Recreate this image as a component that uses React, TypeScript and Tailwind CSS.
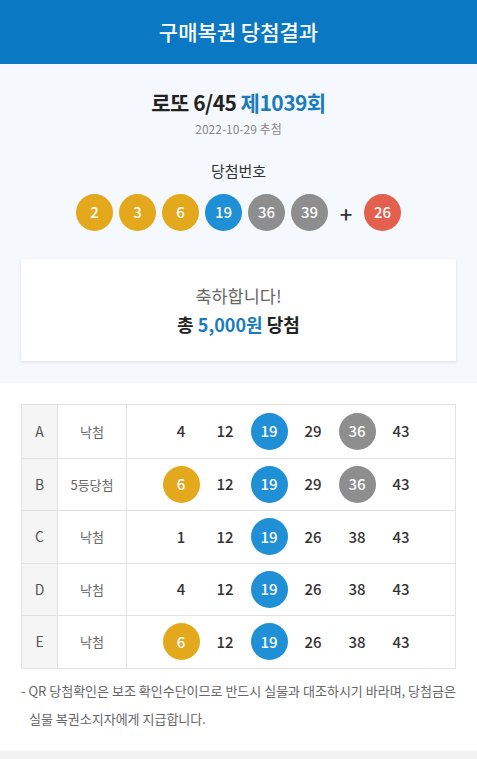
const FONT = "font-['Noto_Sans_CJK_KR','Noto_Sans',sans-serif]";

const WIN = [2, 3, 6, 19, 36, 39];
const BONUS = 26;

const ROWS = [
  { label: "A", result: "낙첨", nums: [4, 12, 19, 29, 36, 43] },
  { label: "B", result: "5등당첨", nums: [6, 12, 19, 29, 36, 43] },
  { label: "C", result: "낙첨", nums: [1, 12, 19, 26, 38, 43] },
  { label: "D", result: "낙첨", nums: [4, 12, 19, 26, 38, 43] },
  { label: "E", result: "낙첨", nums: [6, 12, 19, 26, 38, 43] },
];

function ballColor(n: number) {
  if (n <= 10) return "bg-[#e4a81d]";
  if (n <= 20) return "bg-[#1f8fd6]";
  if (n <= 30) return "bg-[#e3604f]";
  if (n <= 40) return "bg-[#8e8e8e]";
  return "bg-[#a9c94a]";
}

function Ball({ n }: { n: number }) {
  return (
    <div
      className={`w-[37px] h-[37px] rounded-full flex items-center justify-center text-white text-[15px] font-medium ${ballColor(n)}`}
    >
      {n}
    </div>
  );
}

export default function App() {
  return (
    <main className={`w-[477px] min-h-[759px] bg-white ${FONT}`}>
      <header className="h-[64px] bg-[#0a78c2] flex items-center justify-center">
        <h1 className="text-white text-[21px] font-medium">구매복권 당첨결과</h1>
      </header>

      <section className="bg-[#f5f9fd] pt-[23px] pb-[22px] px-[21px]">
        <div className="flex flex-col items-center">
          <h2 className="text-[21px] font-bold text-[#222] leading-[30px] tracking-tight">
            로또 6/45 <span className="text-[#1a7cbf]">제1039회</span>
          </h2>
          <p className="text-[12px] text-[#888] leading-[18px] mt-[3px]">2022-10-29 추첨</p>
          <p className="text-[15px] text-[#333] leading-[22px] mt-[22px]">당첨번호</p>
          <div className="flex items-center gap-[6px] mt-[12px]">
            {WIN.map((n) => (
              <Ball key={n} n={n} />
            ))}
            <span className="w-[22px] text-center text-[22px] font-medium text-[#333] leading-none mx-[1px]">+</span>
            <Ball n={BONUS} />
          </div>
        </div>

        <div className="mt-[28px] bg-white shadow-[0_1px_3px_rgba(0,0,0,0.12)] h-[102px] flex flex-col items-center justify-center">
          <p className="text-[17.5px] text-[#666] leading-[24px]">축하합니다!</p>
          <p className="text-[18px] font-bold text-[#222] leading-[26px] mt-[3px]">
            총 <span className="text-[#1a7cbf]">5,000원</span> 당첨
          </p>
        </div>
      </section>

      <section className="px-[21px] pt-[21px]">
        <div className="border border-[#e2e2e2]">
          {ROWS.map((r, i) => (
            <div
              key={r.label}
              className={`flex h-[52.5px] ${i > 0 ? "border-t border-[#e2e2e2]" : ""}`}
            >
              <div className="w-[36px] bg-[#f5f5f5] border-r border-[#e2e2e2] flex items-center justify-center text-[14px] text-[#555]">
                {r.label}
              </div>
              <div className="w-[69px] border-r border-[#e2e2e2] flex items-center justify-center text-[13px] text-[#666]">
                {r.result}
              </div>
              <div className="flex-1 flex items-center justify-center gap-[7px]">
                {r.nums.map((n) =>
                  WIN.includes(n) ? (
                    <Ball key={n} n={n} />
                  ) : (
                    <div
                      key={n}
                      className="w-[37px] h-[37px] flex items-center justify-center text-[15px] font-medium text-[#333]"
                    >
                      {n}
                    </div>
                  )
                )}
              </div>
            </div>
          ))}
        </div>

        <p className="mt-[8px] text-[13px] text-[#666] leading-[28px] pl-[8px] -indent-[8px]">
          - QR 당첨확인은 보조 확인수단이므로 반드시 실물과 대조하시기 바라며, 당첨금은 실물 복권소지자에게 지급합니다.
        </p>
      </section>

      <div className="mt-[18px] h-[20px] bg-[#f2f2f2]" />
    </main>
  );
}
